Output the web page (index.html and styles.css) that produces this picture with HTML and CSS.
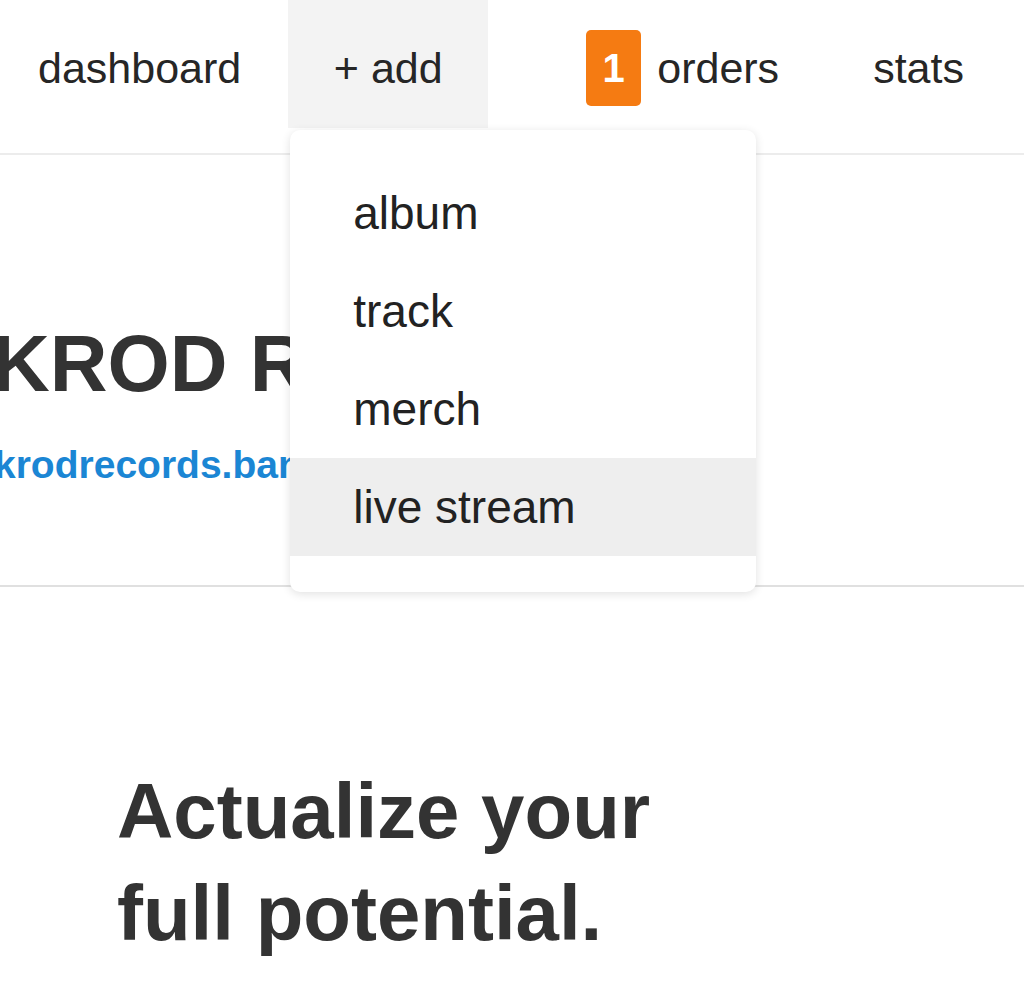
FILE: index.html
```html
<!DOCTYPE html>
<html lang="en">
<head>
<meta charset="utf-8">
<title>Dashboard</title>
<link rel="stylesheet" href="styles.css">
</head>
<body>
<header class="topbar">
  <nav class="menu">
    <a class="menu-item" href="#">dashboard</a>
    <div class="menu-item add-item">
      <span>+ add</span>
      <ul class="dropdown">
        <li class="dropdown-item">album</li>
        <li class="dropdown-item">track</li>
        <li class="dropdown-item">merch</li>
        <li class="dropdown-item active">live stream</li>
      </ul>
    </div>
    <a class="menu-item orders" href="#"><span class="badge">1</span>orders</a>
    <a class="menu-item" href="#">stats</a>
  </nav>
</header>
<section class="artist">
  <h1 class="artist-name">KROD RECORDS</h1>
  <a class="artist-url" href="#">krodrecords.bandcamp.com</a>
</section>
<section class="promo">
  <h2 class="promo-title">Actualize your<br>full potential.</h2>
</section>
</body>
</html>
```

FILE: styles.css
```css
html, body {
  margin: 0;
  padding: 0;
  background: #ffffff;
  font-family: "Liberation Sans", Arial, sans-serif;
  overflow: hidden;
}

.topbar {
  height: 153px;
  border-bottom: 2px solid #ececec;
  position: relative;
  z-index: 5;
}

.menu {
  display: flex;
  margin-left: -9px;
  height: 128px;
}

.menu-item {
  display: flex;
  align-items: center;
  height: 128px;
  box-sizing: border-box;
  padding: 8px 47px 0;
  font-size: 43px;
  color: #262626;
  text-decoration: none;
  white-space: nowrap;
  position: relative;
}

.add-item {
  background: #f3f3f3;
  width: 200px;
  justify-content: center;
  padding-left: 0;
  padding-right: 0;
}

.orders {
  margin-left: 51px;
}

.badge {
  display: flex;
  align-items: center;
  justify-content: center;
  width: 55px;
  height: 76px;
  margin-right: 16px;
  background: #f57b12;
  border-radius: 5px;
  color: #ffffff;
  font-weight: bold;
  font-size: 40px;
}

.dropdown {
  position: absolute;
  top: 130px;
  left: 2px;
  width: 466px;
  margin: 0;
  padding: 34px 0 36px;
  list-style: none;
  background: #ffffff;
  border-radius: 10px;
  box-shadow: 0 2px 10px rgba(0, 0, 0, 0.12);
}

.dropdown-item {
  height: 98px;
  line-height: 98px;
  padding-left: 63px;
  font-size: 46px;
  color: #222222;
}

.dropdown-item.active {
  background: #eeeeee;
}

.artist {
  padding: 163px 0 97px;
  border-bottom: 2px solid #e0e0e0;
  white-space: nowrap;
}

.artist-name {
  margin: 0 0 0 -8px;
  font-size: 80px;
  line-height: 92px;
  font-weight: bold;
  color: #333333;
}

.artist-url {
  display: block;
  margin: 31px 0 0 -6px;
  font-size: 39px;
  line-height: 47px;
  font-weight: bold;
  color: #1b86d4;
  text-decoration: none;
}

.promo {
  padding: 173px 0 0 117px;
}

.promo-title {
  margin: 0;
  font-size: 78px;
  line-height: 102px;
  font-weight: bold;
  color: #333333;
}
```
